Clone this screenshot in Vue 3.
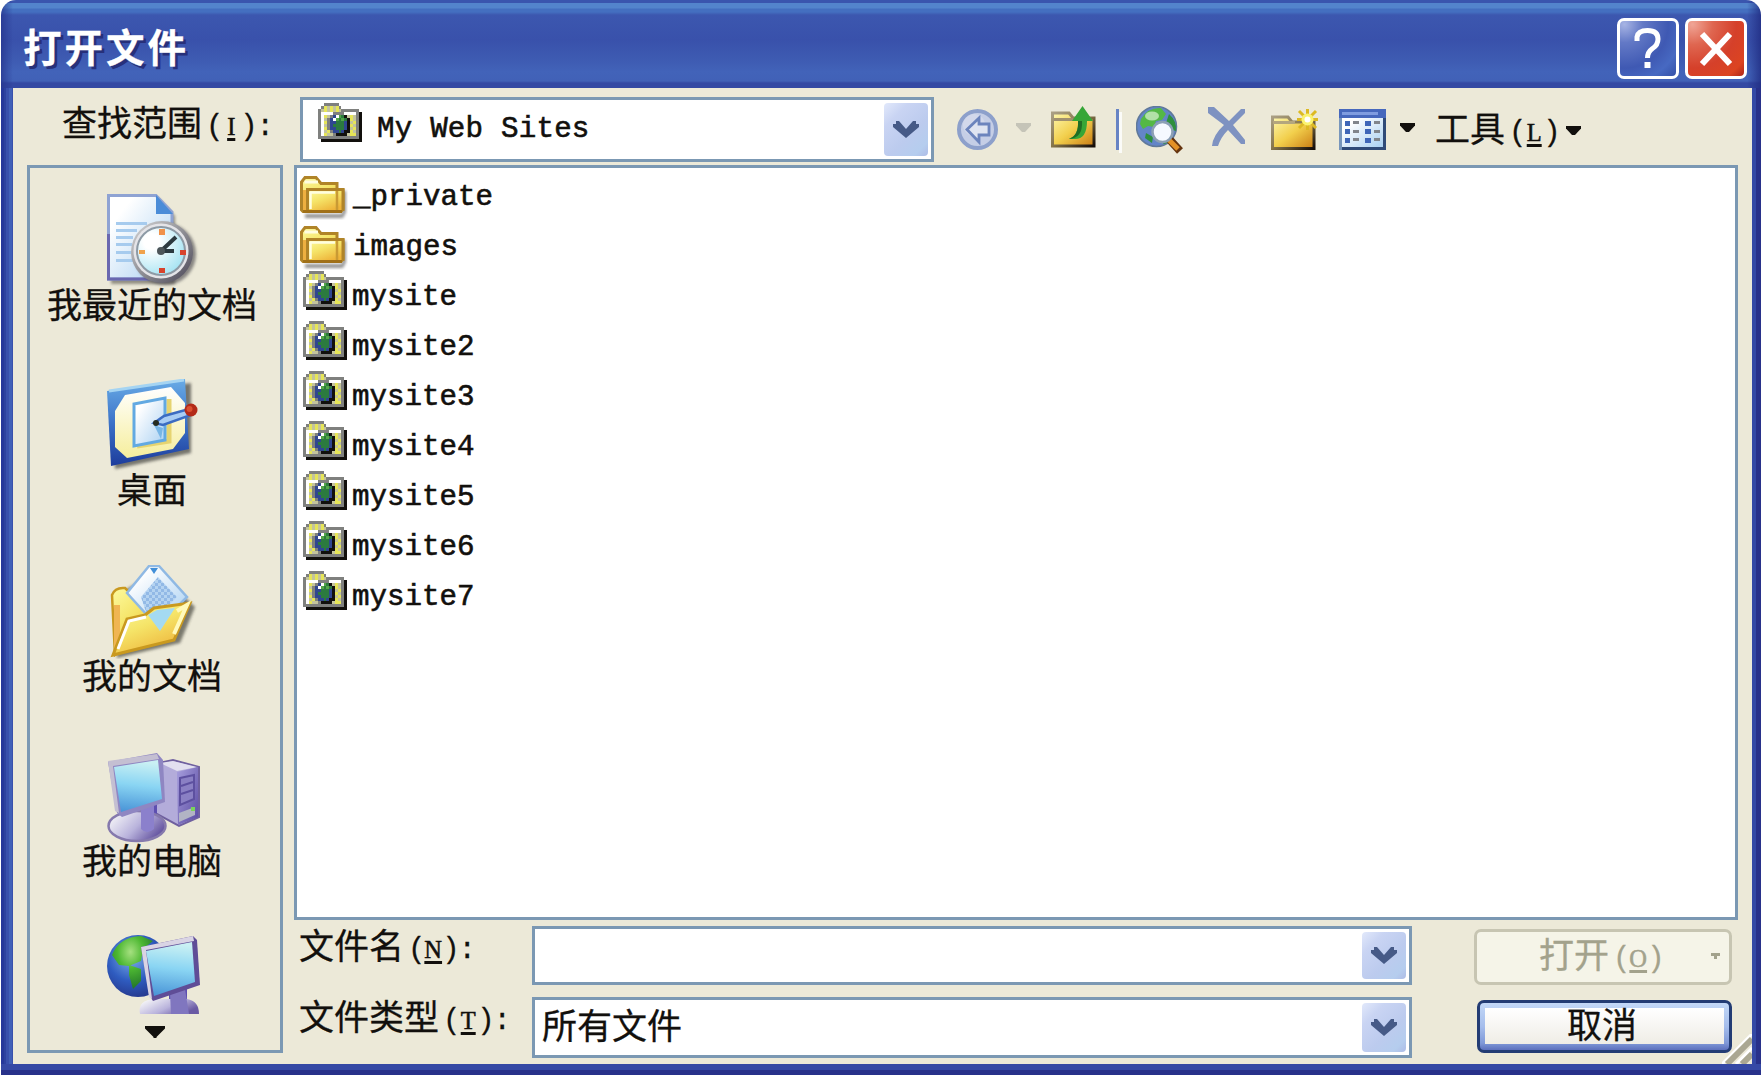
<script setup>
import { ref } from "vue";

const folder = ref("My Web Sites");
const fileName = ref("");
const fileType = ref("所有文件");
const selected = ref("");

const places = [
  { id: "recent", label: "我最近的文档" },
  { id: "desktop", label: "桌面" },
  { id: "docs", label: "我的文档" },
  { id: "computer", label: "我的电脑" },
];

const files = [
  { name: "_private", type: "folder" },
  { name: "images", type: "folder" },
  { name: "mysite", type: "site" },
  { name: "mysite2", type: "site" },
  { name: "mysite3", type: "site" },
  { name: "mysite4", type: "site" },
  { name: "mysite5", type: "site" },
  { name: "mysite6", type: "site" },
  { name: "mysite7", type: "site" },
];

// web folder icon, one letter per pixel
const siteRows = [
  "..ggggg........",
  ".gysysyg.......",
  "gsysysysgggggg.",
  "gwwwwggggwwwwgk",
  "gwysgbwlnksysgk",
  "gwsgbwlnlnkysgk",
  "gwygbbnnnbksygk",
  "gwsgbnnnnbkysgk",
  "gwygbbnnnbksygk",
  "gwsygbbnbkkysgk",
  "gwyssgkkkksyygk",
  "ggggggggggggggk",
  ".kkkkkkkkkkkkkk",
];
const siteColors = {
  g: "#7f807e",
  y: "#e6e558",
  s: "#c4c49c",
  w: "#ffffff",
  k: "#12100d",
  b: "#2f4690",
  n: "#2b7a3e",
  l: "#52a548",
};
const sitePixels = [];
siteRows.forEach((row, y) => {
  row.split("").forEach((c, x) => {
    if (c !== ".") sitePixels.push({ x, y, fill: siteColors[c] });
  });
});

function select(name) {
  selected.value = name;
}
</script>

<template>
  <div class="window">
    <svg class="defs" width="0" height="0">
      <defs>
        <symbol id="site" viewBox="0 0 15 13" preserveAspectRatio="none">
          <rect v-for="(p, i) in sitePixels" :key="i" :x="p.x" :y="p.y" width="1" height="1" :fill="p.fill" shape-rendering="crispEdges" />
        </symbol>
        <linearGradient id="gFolder" x1="0" y1="0" x2="0.6" y2="1">
          <stop offset="0" stop-color="#fdfba0" />
          <stop offset="0.5" stop-color="#f5e468" />
          <stop offset="1" stop-color="#eeb43a" />
        </linearGradient>
        <linearGradient id="gFolderDark" x1="0" y1="0" x2="1" y2="1">
          <stop offset="0" stop-color="#fdf8b0" />
          <stop offset="0.5" stop-color="#f2cf4c" />
          <stop offset="1" stop-color="#c97a12" />
        </linearGradient>
        <linearGradient id="gEdge" x1="0" y1="0" x2="1" y2="1">
          <stop offset="0" stop-color="#aa9f83" />
          <stop offset="0.5" stop-color="#857449" />
          <stop offset="1" stop-color="#150d08" />
        </linearGradient>
        <linearGradient id="gScreen" x1="0.2" y1="0" x2="0.1" y2="1">
          <stop offset="0" stop-color="#c9f0f3" />
          <stop offset="0.45" stop-color="#8ad5f3" />
          <stop offset="1" stop-color="#4792d6" />
        </linearGradient>
        <linearGradient id="gPaper" x1="0" y1="0" x2="1" y2="1">
          <stop offset="0.2" stop-color="#ffffff" />
          <stop offset="1" stop-color="#a9d0f2" />
        </linearGradient>
        <linearGradient id="gDesk" x1="0" y1="0" x2="0" y2="1">
          <stop offset="0" stop-color="#69ace6" />
          <stop offset="0.5" stop-color="#3c73c8" />
          <stop offset="1" stop-color="#1d3c9c" />
        </linearGradient>
        <linearGradient id="gCream" x1="0" y1="0" x2="0" y2="1">
          <stop offset="0" stop-color="#ffffff" />
          <stop offset="1" stop-color="#f6ee9c" />
        </linearGradient>
        <radialGradient id="gFace" cx="0.3" cy="0.3" r="0.8">
          <stop offset="0.2" stop-color="#ffffff" />
          <stop offset="1" stop-color="#a2e2f2" />
        </radialGradient>
        <linearGradient id="gRim" x1="0" y1="0" x2="1" y2="1">
          <stop offset="0" stop-color="#d8d8d8" />
          <stop offset="0.5" stop-color="#8f8f95" />
          <stop offset="1" stop-color="#4a4656" />
        </linearGradient>
        <radialGradient id="gSea" cx="0.4" cy="0.35" r="0.65">
          <stop offset="0" stop-color="#7fb2e8" />
          <stop offset="0.6" stop-color="#2f5cc0" />
          <stop offset="1" stop-color="#263b92" />
        </radialGradient>
        <radialGradient id="gLand" cx="0.45" cy="0.3" r="0.7">
          <stop offset="0" stop-color="#a6e080" />
          <stop offset="0.45" stop-color="#4db832" />
          <stop offset="1" stop-color="#22752a" />
        </radialGradient>
        <linearGradient id="gBase" x1="0" y1="0" x2="1" y2="0.5">
          <stop offset="0.1" stop-color="#f6f6f8" />
          <stop offset="0.6" stop-color="#b9b3dc" />
          <stop offset="1" stop-color="#6a5aa4" />
        </linearGradient>
        <linearGradient id="gCase" x1="0" y1="0" x2="1" y2="1">
          <stop offset="0" stop-color="#a79fdd" />
          <stop offset="1" stop-color="#5a4aa2" />
        </linearGradient>
        <pattern id="dots" width="6" height="6" patternUnits="userSpaceOnUse">
          <rect width="6" height="6" fill="#b4d3f1" />
          <rect width="3" height="3" fill="#92b9e6" />
          <rect x="3" y="3" width="3" height="3" fill="#92b9e6" />
        </pattern>
        <filter id="soft" x="-20%" y="-20%" width="140%" height="140%">
          <feGaussianBlur stdDeviation="1.8" />
        </filter>
      </defs>
    </svg>

    <header class="titlebar">
      <h1>打开文件</h1>
      <button class="caption help" aria-label="help">
        <svg width="62" height="61" viewBox="0 0 62 61">
          <path d="M20 23 V19 Q21 12.500 30.500 12.500 Q41 12.500 41 21 Q41 27 35.500 30.500 Q30.500 34 30.500 40" fill="none" stroke="#fff" stroke-width="5" />
          <rect x="27.500" y="44" width="6" height="6" fill="#fff" />
        </svg>
      </button>
      <button class="caption close" aria-label="close">
        <svg width="62" height="61" viewBox="0 0 62 61">
          <path d="M17 16 L45 46 M45 16 L17 46" fill="none" stroke="#fff" stroke-width="6" />
        </svg>
      </button>
    </header>

    <div class="body">
      <div class="toolbar">
        <label class="look">查找范围<span class="key">(<u>I</u>):</span></label>
        <div class="combo lookin">
          <svg class="site" width="44" height="39"><use href="#site" /></svg>
          <span class="latin">{{ folder }}</span>
          <span class="drop">
            <svg width="26" height="17" viewBox="0 0 26 17"><path d="M0 3 H3 V0 H6 L13 8 L20 0 H23 V3 H26 V6 L13 17 L0 6 Z" fill="#465a87" /></svg>
          </span>
        </div>
        <svg class="tool back" width="41" height="41" viewBox="0 0 41 41">
          <circle cx="20.500" cy="20.500" r="18.500" fill="#c5cee6" stroke="#8da0cb" stroke-width="4" />
          <circle cx="17" cy="16" r="11" fill="#dbe0ee" opacity="0.6" />
          <path d="M10 20.500 L22 9 V15 H32 V26 H22 V33 Z" fill="#dfe4f1" stroke="#6c84bd" stroke-width="2.800" />
        </svg>
        <svg class="arrow dim" width="15" height="9" viewBox="0 0 15 9"><path d="M0 0 H15 V2.500 L9 9 H6 L0 2.500 Z" fill="#c5c4b8" /></svg>
        <svg class="tool up" width="45" height="42" viewBox="0 0 45 42">
          <path d="M1.500 10 V7 H18 L22 12 H43 V40 H1.500 Z" fill="url(#gFolderDark)" stroke="url(#gEdge)" stroke-width="3" />
          <path d="M3 13.500 H22" stroke="#a0906e" stroke-width="3" />
          <path d="M18 33 Q28 29 27 15 H21 L31.500 0 L42 15 H36 Q36 33 24 33 Z" fill="#36a637" />
          <path d="M18 33 Q28 29 27 15 L31 15 Q32 32 18 33 Z" fill="#206d25" />
        </svg>
        <i class="sep"></i>
        <svg class="tool globe" width="48" height="48" viewBox="0 0 48 48">
          <circle cx="20.500" cy="20.500" r="20" fill="#6385c8" stroke="#60799a" stroke-width="1.500" />
          <path d="M5 13 Q12 1 25 2 L30 8 L26 14 L20 15 L18 21 L12 20 L7 23 L4 18 Z" fill="#54b846" />
          <path d="M33 8 Q41 15 40 25 L33 23 L30 17 Z M10 27 L17 31 L16 37 L9 32 Z M32 29 L36 31 Q33 38 27 38 Z" fill="#2e903d" />
          <ellipse cx="16" cy="10" rx="7" ry="4.500" fill="#c9ebc0" opacity="0.8" />
          <path d="M34 34 L44 45" stroke="#65340f" stroke-width="8" />
          <path d="M33 34 L42 43" stroke="#e39126" stroke-width="5" />
          <circle cx="26.500" cy="26" r="10" fill="#f5f9ff" stroke="#8ca0b5" stroke-width="2.500" />
        </svg>
        <svg class="tool del" width="38" height="42" viewBox="0 0 38 42">
          <path d="M0 1 H6 L21 15 L33 3 H37 V7 L25 19 L37 34 V38 H33 L20 24 Q13 31 10 40 H4 Q5 29 16 19 L0 7 Z" fill="#7e92c1" />
        </svg>
        <svg class="tool newf" width="48" height="42" viewBox="0 0 48 42">
          <path d="M1.500 12 V8 H17 L21 13 H43 V39.500 H1.500 Z" fill="url(#gFolderDark)" stroke="url(#gEdge)" stroke-width="3" />
          <path d="M2 13.500 H24" stroke="#b4a67e" stroke-width="3" />
          <path d="M36.500 0 V21 M26 10.500 H47 M28 2 L45 19 M45 2 L28 19" stroke="#dcb923" stroke-width="3" />
          <circle cx="36.500" cy="10.500" r="6" fill="#fbf36f" />
          <circle cx="36.500" cy="10.500" r="3" fill="#fff" />
        </svg>
        <svg class="tool views" width="47" height="41" viewBox="0 0 47 41">
          <rect width="47" height="41" fill="#2f4a78" />
          <rect width="3" height="41" fill="#7896bc" />
          <rect x="3" y="8" width="41" height="30" fill="url(#gPaper)" />
          <rect width="47" height="9" fill="#4668bd" />
          <rect x="3" y="3" width="36" height="3" fill="#7f9ce0" />
          <g fill="#3f66b8">
            <rect x="6" y="12" width="5" height="5" /><rect x="6" y="20" width="5" height="5" /><rect x="6" y="29" width="5" height="5" />
            <rect x="26" y="12" width="6" height="5" /><rect x="26" y="20" width="6" height="5" /><rect x="26" y="29" width="6" height="5" />
          </g>
          <path d="M14 13.500 H20 M14 22.500 H20 M14 30.500 H20 M35 13.500 H41 M35 22.500 H41 M35 30.500 H41" stroke="#81858c" stroke-width="3" />
        </svg>
        <svg class="arrow" width="15" height="9" viewBox="0 0 15 9"><path d="M0 0 H15 V2.500 L9 9 H6 L0 2.500 Z" fill="#12100d" /></svg>
        <span class="menu">工具<span class="key">(<u>L</u>)</span></span>
        <svg class="arrow last" width="15" height="9" viewBox="0 0 15 9"><path d="M0 0 H15 V2.500 L9 9 H6 L0 2.500 Z" fill="#12100d" /></svg>
      </div>

      <div class="main">
        <nav class="places">
          <a v-for="p in places" :key="p.id" class="place">
            <svg v-if="p.id === 'recent'" width="94" height="94" viewBox="0 0 94 94">
              <path d="M4 5 H52 L68 22 V90 H4 Z" fill="#55534c" opacity="0.6" filter="url(#soft)" />
              <path d="M1.500 1.500 H49 L65 18 V85 H1.500 Z" fill="url(#gPaper)" stroke="#8fa3d3" stroke-width="3" />
              <path d="M1.500 40 V85 H60" fill="none" stroke="#6a68b0" stroke-width="3" />
              <path d="M49 1 V20 H66 Z" fill="#4a8cd8" />
              <path d="M9 29.500 H40 M9 36.500 H30 M9 43.500 H26 M9 50.500 H25 M9 58.500 H25 M9 66.500 H28" stroke="#a6cbee" stroke-width="3" />
              <circle cx="58" cy="60" r="31" fill="#44424a" opacity="0.6" filter="url(#soft)" />
              <circle cx="55" cy="58" r="31" fill="url(#gRim)" />
              <circle cx="54" cy="57" r="27.500" fill="#e4e4e8" />
              <circle cx="54" cy="57" r="24" fill="url(#gFace)" stroke="#8d9aa5" stroke-width="2" />
              <path d="M54 57 L69 43 M54 57 H67" stroke="#2c3a40" stroke-width="4" />
              <circle cx="54" cy="57" r="4" fill="#4c5559" />
              <rect x="52" y="35" width="6" height="6" fill="#f0924a" />
              <rect x="32" y="56" width="6" height="4" fill="#f0a24a" />
              <rect x="73" y="56" width="6" height="5" fill="#d8432c" />
              <rect x="52" y="74" width="6" height="5" fill="#d8432c" />
            </svg>
            <svg v-else-if="p.id === 'desktop'" width="94" height="94" viewBox="0 0 94 94">
              <path d="M5 14 L84 4 V74 L8 90 Z" fill="#45443f" opacity="0.7" filter="url(#soft)" />
              <path d="M0 12 L78 0 L82 70 L4 87 Z" fill="url(#gDesk)" />
              <path d="M2 12 L77 1" stroke="#a5d4f2" stroke-width="3" />
              <path d="M18 16 L64 8 L78 24 V54 L66 70 L20 79 L8 68 V32 Z" fill="url(#gCream)" />
              <path d="M30 67 L62 62 V20" fill="none" stroke="#e6d470" stroke-width="5" />
              <path d="M27 25 L58 19 V61 L27 67 Z" fill="url(#gPaper)" stroke="#62a9e2" stroke-width="3" />
              <path d="M47 46 L56 49 L54 60 Z" fill="#78b6e6" />
              <path d="M47 44 L57 37 L82 30 L84 36 L56 46 Z" fill="#a9cdf4" stroke="#3c6cc2" stroke-width="2.500" />
              <circle cx="49" cy="44" r="3" fill="#262b20" />
              <circle cx="84" cy="31" r="6.500" fill="#b32a18" />
              <circle cx="82.500" cy="30" r="3" fill="#dc5030" />
            </svg>
            <svg v-else-if="p.id === 'docs'" width="94" height="94" viewBox="0 0 94 94">
              <path d="M10 30 L50 6 L88 42 L73 78 L10 93 Z" fill="#3e3d36" opacity="0.65" filter="url(#soft)" />
              <path d="M5 30 Q8 22 18 23 L36 40 L50 60 L8 90 Z" fill="url(#gFolder)" stroke="#c9991f" stroke-width="2.500" />
              <path d="M10 40 V84" stroke="#f0b552" stroke-width="6" />
              <path d="M20 28 L42 1 H52 L80 32 L60 52 L40 50 Z" fill="url(#gPaper)" stroke="#8fb9e4" stroke-width="2.500" />
              <path d="M34 32 L51 12 L70 32 L52 50 H40 Z" fill="url(#dots)" />
              <path d="M43 3 H51 L47 9 Z" fill="#418fd8" />
              <path d="M6 90 L20 54 L38 50 L47 43 L83 38 L67 75 Z" fill="url(#gFolder)" stroke="#c9991f" stroke-width="3" />
              <path d="M11 84 L22 56 L39 52" fill="none" stroke="#fff" stroke-width="3" />
              <path d="M70 46 L80 40 L67 69" fill="none" stroke="#fff9ba" stroke-width="4" />
              <path d="M41 50 L50 45 L68 43 L53 66 Z" fill="#a4daf2" />
            </svg>
            <svg v-else width="94" height="94" viewBox="0 -3 94 94">
              <path d="M52 10 L66 7 L92 14 V64 L72 73 L48 60 Z" fill="#b3acda" stroke="#6f609f" stroke-width="2" />
              <path d="M53 10 L66 8 L90 14 L70 18 Z" fill="#e2e0f0" />
              <path d="M70 19 L91 14 V64 L71 72 Z" fill="url(#gCase)" />
              <path d="M73 25 L87 22 V46 L73 52 Z M74 33 L86 29 M74 41 L86 37" fill="#8a80c4" stroke="#5d50a0" stroke-width="2" />
              <path d="M72 60 L88 54 V62 L72 69 Z" fill="#b2b4c4" />
              <rect x="84" y="54" width="4" height="4" fill="#7ad45a" />
              <path d="M34 54 L50 50 V76 H34 Z" fill="#5d4fb0" />
              <ellipse cx="30" cy="73" rx="28.500" ry="15" fill="url(#gBase)" stroke="#8579ad" stroke-width="2.500" />
              <path d="M34 56 L47 52 V76 Q40 82 34 76 Z" fill="#8b80cc" />
              <path d="M1 9 L50 0 L56 7 L58 49 L15 64 L10 60 Z" fill="#8f86c2" />
              <path d="M1 8 L50 1 L52 6 L6 13 L12 60 L8 58 Z" fill="#c4bfd2" />
              <path d="M7 14 L51 7 L55 46 L14 59 Z" fill="url(#gScreen)" />
            </svg>
            <span>{{ p.label }}</span>
          </a>
          <div class="place network">
            <svg width="94" height="79" viewBox="0 0 94 79">
              <circle cx="31" cy="31" r="31" fill="url(#gSea)" />
              <path d="M5 20 Q12 2 34 1 L46 6 L36 14 L34 26 L22 31 L12 30 Z M22 30 L34 34 L34 46 L26 54 L22 40 Z" fill="url(#gLand)" />
              <path d="M62 56 L80 50 V72 H62 Z" fill="#5d4fb0" />
              <path d="M33 79 Q30 65 48 64 H80 Q92 66 92 79 Z" fill="url(#gBase)" />
              <path d="M63 58 L78 54 L82 79 H64 Z" fill="#8076bf" />
              <path d="M34 12 L86 1 L90 5 L93 50 L46 66 L42 60 Z" fill="#5f4d97" />
              <path d="M34 12 L86 1 L87 6 L39 15 L45 64 L42 62 Z" fill="#d9d4e4" />
              <path d="M39 16 L85 7 L88 47 L47 61 Z" fill="url(#gScreen)" />
            </svg>
          </div>
          <svg class="more" width="20" height="12" viewBox="0 0 20 12"><path d="M0 0 H20 V2.500 L11.500 11 V12 H8.500 V11 L0 2.500 Z" fill="#12100d" /></svg>
        </nav>

        <div class="content">
          <ul class="files">
            <li v-for="f in files" :key="f.name" @click="select(f.name)">
              <svg v-if="f.type === 'folder'" class="folder" width="48" height="44" viewBox="0 0 48 44">
                <path d="M5 38 H42 V15 H46 V36 L43 42 H5 Z" fill="#4a4a4a" opacity="0.6" filter="url(#soft)" />
                <path d="M1.500 34 V6 L5 1.500 H16 L21 7.500 H37 V14 H43 V33 L41 35.500 H3 Z" fill="url(#gFolder)" stroke="#b08428" stroke-width="3" />
                <path d="M4.500 6 H18" stroke="#fffde0" stroke-width="3" />
                <path d="M4.500 14 V34" stroke="#eeb040" stroke-width="3" />
                <path d="M7.500 35 V13.500 H43 V35" fill="url(#gFolder)" stroke="#b08428" stroke-width="3" />
                <path d="M10 16.500 H35 M10.500 16 V33" stroke="#fffee0" stroke-width="2.500" />
                <path d="M37 15 V34" stroke="#c99a34" stroke-width="2.500" />
                <path d="M3 35.500 H42" stroke="#a07018" stroke-width="3" />
              </svg>
              <svg v-else class="site" width="44" height="39"><use href="#site" /></svg>
              <span class="latin">{{ f.name }}</span>
            </li>
          </ul>

          <div class="form">
            <label>文件名<span class="key">(<u>N</u>):</span></label>
            <div class="combo name">
              <span class="value">{{ fileName }}</span>
              <span class="drop">
                <svg width="26" height="17" viewBox="0 0 26 17"><path d="M0 3 H3 V0 H6 L13 8 L20 0 H23 V3 H26 V6 L13 17 L0 6 Z" fill="#465a87" /></svg>
              </span>
            </div>
            <button class="btn open" disabled>
              <span>打开<span class="key">(<u>O</u>)</span></span>
              <svg width="9" height="6" viewBox="0 0 9 6"><path d="M0 0 H9 V3 H6 V6 H3 V3 H0 Z" fill="#a3a28c" /></svg>
            </button>

            <label>文件类型<span class="key">(<u>T</u>):</span></label>
            <div class="combo kind">
              <span class="value">{{ fileType }}</span>
              <span class="drop">
                <svg width="26" height="17" viewBox="0 0 26 17"><path d="M0 3 H3 V0 H6 L13 8 L20 0 H23 V3 H26 V6 L13 17 L0 6 Z" fill="#465a87" /></svg>
              </span>
            </div>
            <button class="btn cancel"><span>取消</span></button>
          </div>
        </div>
      </div>
      <svg class="grip" width="30" height="30" viewBox="0 0 30 30">
        <path d="M0 30 L30 0 M14 30 L30 14" stroke="#fff" stroke-width="3" />
        <path d="M5 30 L30 5 M20 30 L30 20" stroke="#aaa792" stroke-width="6" />
      </svg>
    </div>
  </div>
</template>

<style>
body {
  margin: 0;
  background: #fff;
}
</style>

<style scoped>
.window {
  box-sizing: border-box;
  width: 1763px;
  height: 1075px;
  padding: 0 2px 0 1px;
  display: flex;
  flex-direction: column;
  color: #12100d;
  font-family: "Noto Sans CJK SC", sans-serif;
  font-size: 35px;
  line-height: 35px;
  -webkit-text-stroke: 0.3px currentColor;
  overflow: hidden;
}
.defs {
  position: absolute;
}
svg {
  display: block;
  flex: none;
}
button {
  font: inherit;
  padding: 0;
  box-sizing: border-box;
}
.titlebar {
  flex: none;
  box-sizing: border-box;
  height: 88px;
  padding: 18px 14px 0 22px;
  display: flex;
  align-items: flex-start;
  border-radius: 15px 15px 0 0;
  background:
    linear-gradient(90deg, rgba(36, 50, 140, 0.7) 0, rgba(36, 50, 140, 0) 12px),
    linear-gradient(270deg, rgba(32, 44, 130, 0.8) 0, rgba(36, 50, 140, 0) 14px),
    linear-gradient(#3a55ae 0 3px, #5384cc 3px 8px, #446fc0 9px 12px, #3c57af 15px, #3951ab 40px, #3e5bb2 60px, #4263b9 72px, #4161b7 81px, #3449a3 83px 88px);
}
h1 {
  margin: 7px auto 0 0;
  font-size: 38.5px;
  line-height: 40px;
  letter-spacing: 3px;
  font-weight: 700;
  color: #fff;
  text-shadow: 3px 3px 0 #27307a;
}
.caption {
  width: 62px;
  height: 61px;
  border: 3px solid #fff;
  border-radius: 7px;
  display: flex;
  align-items: center;
  justify-content: center;
}
.help {
  background: radial-gradient(circle at 8% 6%, #a7b4e4 0, #6379c6 25%, #3f59b3 60%, #4769c2 80%, #3450a8 100%);
}
.close {
  margin-left: 6px;
  background: radial-gradient(circle at 8% 6%, #f0a596 0, #df6650 28%, #d5402a 60%, #dc4421 85%, #ad2518 100%);
}
.body {
  position: relative;
  box-sizing: border-box;
  flex: 1;
  border-style: solid;
  border-width: 0 9px 11px 12px;
  border-color: transparent;
  background:
    linear-gradient(#ece9d8, #ece9d8) padding-box,
    linear-gradient(0deg, #28318a 0 5px, #3549a5 5px 11px, transparent 11px) border-box,
    linear-gradient(90deg, #26389a 0 3px, #2d429f 3px 5px, #3950ac 5px 8px, #4160b7 8px 11px, #3950ac 11px 50%, #3449a5 50% calc(100% - 5px), #28318a calc(100% - 5px)) border-box;
}
.toolbar {
  display: flex;
  align-items: flex-start;
  height: 77px;
}
.look {
  box-sizing: border-box;
  flex: none;
  width: 238px;
  margin: 15px 0 0 49px;
  white-space: nowrap;
}
.key {
  display: inline-block;
  margin-left: 4px;
  font-family: "Liberation Mono", monospace;
  font-size: 29px;
  letter-spacing: -1.2px;
  white-space: nowrap;
  vertical-align: 1px;
}
.key u {
  display: inline-block;
  width: 18px;
  text-align: center;
  font-family: "Liberation Serif", serif;
  font-size: 24.500px;
  letter-spacing: 0;
  text-decoration-thickness: 3px;
  text-underline-offset: 3px;
  -webkit-text-stroke: 0.5px currentColor;
}
.latin {
  font-family: "Liberation Mono", monospace;
  font-size: 29.2px;
  line-height: 35px;
  -webkit-text-stroke: 0.6px #12100d;
  white-space: pre;
}
.combo {
  box-sizing: border-box;
  display: flex;
  align-items: flex-start;
  border: 3px solid #7b98b3;
  background: #fff;
  padding: 3px;
}
.drop {
  flex: none;
  align-self: stretch;
  width: 44px;
  margin-left: auto;
  border-radius: 4px;
  display: flex;
  align-items: center;
  justify-content: center;
  background: linear-gradient(135deg, #e2e9fb 0, #c9d4f3 25%, #bccbee 60%, #b5cdee 85%, #aebce6 100%);
}
.lookin {
  flex: none;
  width: 634px;
  height: 65px;
  margin: 9px 0 0;
}
.lookin .site {
  margin-left: 12px;
}
.lookin .latin {
  margin: 9px 0 0 15px;
  letter-spacing: 0.2px;
}
.tool {
  margin-top: 21px;
}
.arrow {
  margin-top: 35px;
}
.back {
  margin-left: 23px;
}
.dim {
  margin-left: 18px;
}
.up {
  margin: 18px 0 0 20px;
}
.sep {
  width: 3px;
  height: 41px;
  margin: 21px 0 0 20px;
  background: #6784c4;
  box-shadow: 3px 3px 0 #fbfbf8;
}
.globe {
  margin: 18px 0 0 17px;
}
.del {
  margin: 18px 0 0 24px;
}
.newf {
  margin-left: 25px;
}
.views {
  margin-left: 20px;
  margin-right: 14px;
}
.menu {
  width: 122px;
  margin: 21px 0 0 20px;
  white-space: nowrap;
}
.last {
  margin: 38px 0 0 9px;
}
.main {
  display: flex;
  gap: 11px;
  padding-left: 14px;
}
.places {
  box-sizing: border-box;
  flex: none;
  width: 256px;
  height: 888px;
  border: 3px solid #7b98b3;
  padding-top: 26px;
  display: flex;
  flex-direction: column;
}
.place {
  height: 185.300px;
  display: flex;
  flex-direction: column;
  align-items: center;
}
.place svg {
  margin-left: -2px;
}
.place span {
  margin-top: -3px;
  margin-left: -6px;
}
.network {
  height: 91px;
}
.more {
  margin: 0 0 0 115px;
}
.content {
  width: 1444px;
}
.files {
  box-sizing: border-box;
  height: 755px;
  margin: 0;
  padding: 2px 3px;
  border: 3px solid #7b98b3;
  background: #fff;
  list-style: none;
}
.files li {
  display: flex;
  align-items: flex-start;
  height: 50px;
}
.folder {
  margin: 6px 5px 0 0;
}
.files .site {
  margin: 1px 5px 0 3px;
}
.files .latin {
  margin-top: 10px;
}
.form {
  display: grid;
  grid-template-columns: 233px 880px 258px;
  grid-template-rows: 59px 61px;
  row-gap: 12px;
  padding: 6px 0 0 5px;
  align-items: start;
}
.form label {
  white-space: nowrap;
}
.name {
  height: 59px;
}
.kind {
  height: 61px;
}
.value {
  margin: 3px 0 0 4px;
}
.btn {
  width: 258px;
  margin-left: 62px;
  display: flex;
  align-items: center;
  justify-content: center;
}
.open {
  height: 56px;
  margin-top: 3px;
  border: 3px solid #c7c5b2;
  border-radius: 7px;
  background: #f5f4e8;
  color: #a3a28c;
  padding: 0 9px 3px 62px;
  justify-content: space-between;
}
.cancel {
  width: 255px;
  height: 53px;
  margin: 3px 0 0 65px;
  border: 3px solid #233c74;
  border-radius: 7px;
  color: #12100d;
  background:
    linear-gradient(#fff, #efede6) 5px 5px / calc(100% - 10px) calc(100% - 11px) no-repeat,
    linear-gradient(#c3d8f7, #a5bdec 50%, #8099d8 85%, #5c70bd);
  padding: 0 5px 9px 0;
}
.grip {
  position: absolute;
  right: 0;
  bottom: 0;
}
</style>
